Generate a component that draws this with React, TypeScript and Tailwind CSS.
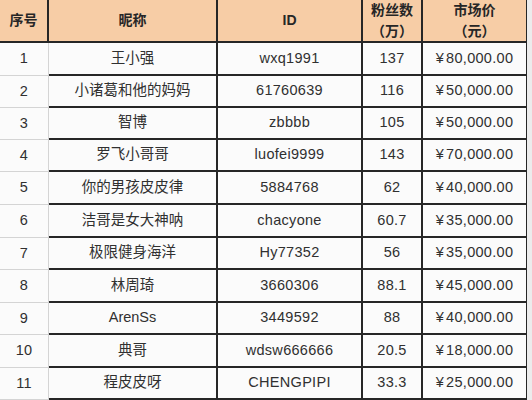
const rows = [
  { no: "1", name: "王小强", id: "wxq1991", fans: "137", price: "¥80,000.00", h: "h-[33px]" },
  { no: "2", name: "小诸葛和他的妈妈", id: "61760639", fans: "116", price: "¥50,000.00", h: "h-[32px]" },
  { no: "3", name: "智博", id: "zbbbb", fans: "105", price: "¥50,000.00", h: "h-[32px]" },
  { no: "4", name: "罗飞小哥哥", id: "luofei9999", fans: "143", price: "¥70,000.00", h: "h-[32px]" },
  { no: "5", name: "你的男孩皮皮律", id: "5884768", fans: "62", price: "¥40,000.00", h: "h-[33px]" },
  { no: "6", name: "洁哥是女大神呐", id: "chacyone", fans: "60.7", price: "¥35,000.00", h: "h-[33px]" },
  { no: "7", name: "极限健身海洋", id: "Hy77352", fans: "56", price: "¥35,000.00", h: "h-[32px]" },
  { no: "8", name: "林周琦", id: "3660306", fans: "88.1", price: "¥45,000.00", h: "h-[33px]" },
  { no: "9", name: "ArenSs", id: "3449592", fans: "88", price: "¥40,000.00", h: "h-[32px]" },
  { no: "10", name: "典哥", id: "wdsw666666", fans: "20.5", price: "¥18,000.00", h: "h-[33px]" },
  { no: "11", name: "程皮皮呀", id: "CHENGPIPI", fans: "33.3", price: "¥25,000.00", h: "h-[32px]" },
]

const dark = "border-[#262626]"

export default function App() {
  return (
    <div
      className="w-[532px] h-[400px] overflow-hidden bg-[#ececec] flex text-[#303030]"
      style={{ fontFamily: '"Liberation Sans", "Noto Sans CJK SC", sans-serif' }}
    >
      <div className="w-[527px] flex flex-col bg-[#fbfbfb]">
        {/* header */}
        <div className={`h-[43px] flex bg-[#f7cda6] border-b-2 ${dark} font-bold text-[14px] text-[#262626]`}>
          <div className={`w-[49px] border-r-2 ${dark} flex items-center justify-center`}>序号</div>
          <div className={`w-[169px] border-r-2 ${dark} flex items-center justify-center`}>昵称</div>
          <div className={`w-[145px] border-r-2 ${dark} flex items-center justify-center`}>ID</div>
          <div className={`w-[60px] border-r-2 ${dark} flex flex-col items-center justify-center leading-[21px]`}>
            <span>粉丝数</span>
            <span>（万）</span>
          </div>
          <div className={`w-[104px] border-r ${dark} flex flex-col items-center justify-center leading-[21px]`}>
            <span>市场价</span>
            <span>（元）</span>
          </div>
        </div>

        {rows.map((r) => (
          <div key={r.no} className={`${r.h} flex text-[14.5px] tracking-[0.3px]`}>
            <div className="w-[49px] border-r border-b border-[#d4d4d4] flex items-center justify-center">{r.no}</div>
            <div className={`w-[169px] border-r-2 border-b-2 ${dark} flex items-center justify-center tracking-normal`}>{r.name}</div>
            <div className={`w-[145px] border-r-2 border-b-2 ${dark} flex items-center justify-center`}>{r.id}</div>
            <div className={`w-[60px] border-r-2 border-b-2 ${dark} flex items-center justify-center`}>{r.fans}</div>
            <div className={`w-[104px] border-r border-b-2 ${dark} flex items-center justify-center gap-[2px]`}>
              <span>¥</span>
              <span>{r.price.slice(1)}</span>
            </div>
          </div>
        ))}
      </div>
    </div>
  )
}
